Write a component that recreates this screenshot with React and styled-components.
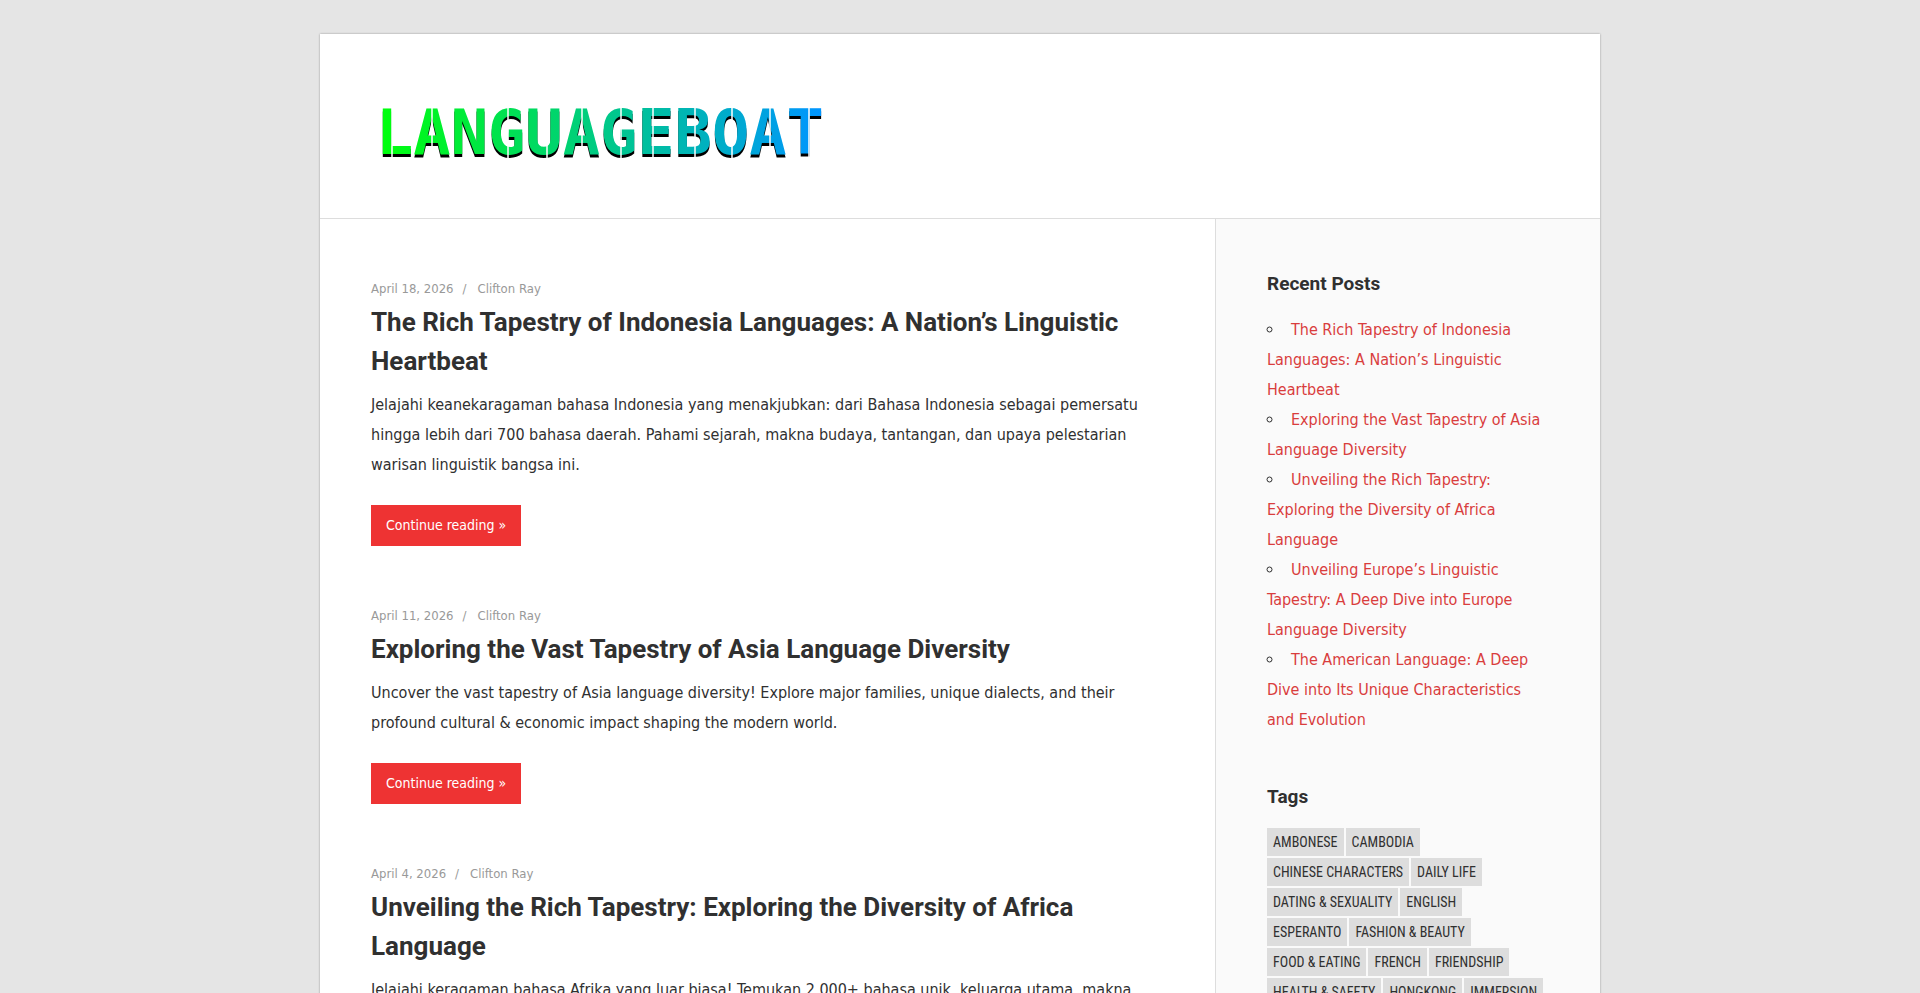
import styled, { createGlobalStyle } from "styled-components";

const GlobalStyle = createGlobalStyle`
  * {
    box-sizing: border-box;
  }
  body {
    margin: 0;
    background: #e5e5e5;
    color: #303030;
    font-family: "DejaVu Sans Condensed", "DejaVu Sans", sans-serif;
    font-size: 16px;
    line-height: 30px;
  }
  a {
    text-decoration: none;
  }
`;

const Page = styled.div`
  max-width: 1280px;
  margin: 34px auto 0;
  background: #fff;
  box-shadow: 0 0 2px rgba(0, 0, 0, 0.35);
`;

const Header = styled.header`
  padding: 42px 51px;
  border-bottom: 1px solid #ddd;
  a {
    display: block;
  }
  svg {
    display: block;
  }
`;

const Columns = styled.div`
  display: grid;
  grid-template-columns: 1fr 385px;
`;

const Posts = styled.main`
  display: flex;
  flex-direction: column;
  gap: 58px;
  padding: 58px 72px 58px 51px;
`;

const Post = styled.article`
  .meta {
    display: flex;
    margin-bottom: 2px;
    font-size: 13px;
    line-height: 24px;
    a {
      color: #999;
    }
    a + a::before {
      content: "/";
      margin: 0 11px 0 9px;
    }
  }
  h2 {
    margin: 0 0 9px;
    font-family: Roboto, sans-serif;
    font-size: 26px;
    line-height: 39px;
    font-weight: 700;
    a {
      color: #303030;
    }
  }
  p {
    margin: 0 0 25px;
  }
`;

const MoreLink = styled.a`
  display: inline-block;
  padding: 0 15px;
  background: #ee3333;
  color: #fff;
  font-size: 14px;
  line-height: 41px;
  vertical-align: top;
`;

const Sidebar = styled.aside`
  padding: 45px 51px;
  background: #fafafa;
  border-left: 1px solid #ddd;
`;

const Widget = styled.section`
  margin-bottom: 42px;
  h3 {
    margin: 0 0 11px;
    font-family: Roboto, sans-serif;
    font-size: 19px;
    line-height: 40px;
    font-weight: 700;
  }
  ul {
    margin: 0;
    padding: 0;
    list-style: circle inside;
  }
  li a {
    margin-left: 2px;
    color: #d93d3d;
  }
`;

const TagCloud = styled.div`
  display: flex;
  flex-wrap: wrap;
  gap: 2px;
  padding-right: 5px;
`;

const Tag = styled.a`
  padding: 0 6px;
  background: #ddd;
  color: #303030;
  font-family: "Roboto Condensed", Roboto, sans-serif;
  font-size: 14px;
  line-height: 28px;
  text-transform: uppercase;
`;

const posts = [
  {
    date: "April 18, 2026",
    title: "The Rich Tapestry of Indonesia Languages: A Nation’s Linguistic Heartbeat",
    text: "Jelajahi keanekaragaman bahasa Indonesia yang menakjubkan: dari Bahasa Indonesia sebagai pemersatu hingga lebih dari 700 bahasa daerah. Pahami sejarah, makna budaya, tantangan, dan upaya pelestarian warisan linguistik bangsa ini.",
  },
  {
    date: "April 11, 2026",
    title: "Exploring the Vast Tapestry of Asia Language Diversity",
    text: "Uncover the vast tapestry of Asia language diversity! Explore major families, unique dialects, and their profound cultural & economic impact shaping the modern world.",
  },
  {
    date: "April 4, 2026",
    title: "Unveiling the Rich Tapestry: Exploring the Diversity of Africa Language",
    text: "Jelajahi keragaman bahasa Afrika yang luar biasa! Temukan 2.000+ bahasa unik, keluarga utama, makna",
  },
];

const recent = [
  "The Rich Tapestry of Indonesia Languages: A Nation’s Linguistic Heartbeat",
  "Exploring the Vast Tapestry of Asia Language Diversity",
  "Unveiling the Rich Tapestry: Exploring the Diversity of Africa Language",
  "Unveiling Europe’s Linguistic Tapestry: A Deep Dive into Europe Language Diversity",
  "The American Language: A Deep Dive into Its Unique Characteristics and Evolution",
];

const tags = [
  "Ambonese",
  "Cambodia",
  "Chinese Characters",
  "Daily Life",
  "Dating & Sexuality",
  "English",
  "Esperanto",
  "Fashion & Beauty",
  "Food & Eating",
  "French",
  "Friendship",
  "Health & Safety",
  "Hongkong",
  "Immersion",
];

// stencil cuts through the logo letters
const cuts = [21, 61, 137, 176, 211, 250, 282, 324, 361, 399, 438];

const Logo = () => (
  <svg width="460" height="100" viewBox="0 0 460 100" role="img" aria-label="LanguageBoat">
    <defs>
      <linearGradient id="logo" gradientUnits="userSpaceOnUse" x1="11" y1="0" x2="450" y2="0">
        <stop offset="0" stopColor="#00ff0c" />
        <stop offset="1" stopColor="#0095ff" />
      </linearGradient>
    </defs>
    <g fontFamily="DejaVu Sans Mono, monospace" fontWeight="700" fontSize="62">
      <text x="5" y="81" fill="#000" aria-hidden="true">LANGUAGEBOAT</text>
      <text x="5" y="78" fill="url(#logo)">LANGUAGEBOAT</text>
    </g>
    {cuts.map((x) => (
      <path key={x} d={`M${x} 31V83`} stroke="#fff" strokeWidth="1.5" />
    ))}
  </svg>
);

export default function App() {
  return (
    <>
      <GlobalStyle />
      <Page>
        <Header>
          <a href="#home">
            <Logo />
          </a>
        </Header>
        <Columns>
          <Posts>
            {posts.map((post) => (
              <Post key={post.title}>
                <div className="meta">
                  <a href="#date">{post.date}</a>
                  <a href="#author">Clifton Ray</a>
                </div>
                <h2>
                  <a href="#post">{post.title}</a>
                </h2>
                <p>{post.text}</p>
                <MoreLink href="#post">Continue reading »</MoreLink>
              </Post>
            ))}
          </Posts>
          <Sidebar>
            <Widget>
              <h3>Recent Posts</h3>
              <ul>
                {recent.map((title) => (
                  <li key={title}>
                    <a href="#post">{title}</a>
                  </li>
                ))}
              </ul>
            </Widget>
            <Widget>
              <h3>Tags</h3>
              <TagCloud>
                {tags.map((tag) => (
                  <Tag key={tag} href="#tag">
                    {tag}
                  </Tag>
                ))}
              </TagCloud>
            </Widget>
          </Sidebar>
        </Columns>
      </Page>
    </>
  );
}
